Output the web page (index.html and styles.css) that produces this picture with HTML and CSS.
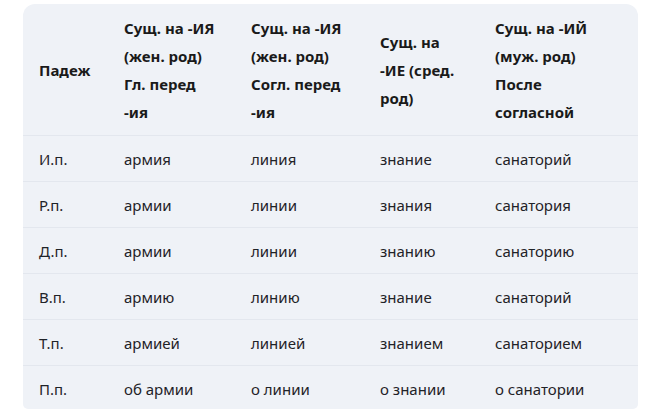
FILE: index.html
```html
<!DOCTYPE html>
<html lang="ru">
<head>
<meta charset="utf-8">
<link rel="stylesheet" href="styles.css">
</head>
<body>
<div class="wrap">
<table class="cases">
<colgroup>
<col class="c1"><col class="c2"><col class="c3"><col class="c4"><col class="c5">
</colgroup>
<thead>
<tr>
<th>Падеж</th>
<th>Сущ. на -ИЯ (жен. род) Гл. перед -ия</th>
<th>Сущ. на -ИЯ (жен. род) Согл. перед -ия</th>
<th>Сущ. на -ИЕ (сред. род)</th>
<th>Сущ. на -ИЙ (муж. род) После согласной</th>
</tr>
</thead>
<tbody>
<tr><td>И.п.</td><td>армия</td><td>линия</td><td>знание</td><td>санаторий</td></tr>
<tr><td>Р.п.</td><td>армии</td><td>линии</td><td>знания</td><td>санатория</td></tr>
<tr><td>Д.п.</td><td>армии</td><td>линии</td><td>знанию</td><td>санаторию</td></tr>
<tr><td>В.п.</td><td>армию</td><td>линию</td><td>знание</td><td>санаторий</td></tr>
<tr><td>Т.п.</td><td>армией</td><td>линией</td><td>знанием</td><td>санаторием</td></tr>
<tr><td>П.п.</td><td>об армии</td><td>о линии</td><td>о знании</td><td>о санатории</td></tr>
</tbody>
</table>
</div>
</body>
</html>
```
FILE: styles.css
```css
html, body {
  margin: 0;
  padding: 0;
  background: #ffffff;
}
body {
  font-family: "Noto Sans", "Open Sans", sans-serif;
  color: #1f2328;
}
.wrap {
  margin: 4px 0 0 23px;
  width: 615px;
  height: 405px;
  background: #eff2f7;
  border-radius: 12px 12px 5px 5px;
  overflow: hidden;
}
.cases {
  width: 100%;
  border-collapse: collapse;
  table-layout: fixed;
}
.c1 { width: 85px; }
.c2 { width: 127px; }
.c3 { width: 129px; }
.c4 { width: 115px; }
.c5 { width: 159px; }
th, td {
  text-align: left;
  vertical-align: middle;
  padding: 9px 16px 8px;
  line-height: 28px;
}
th {
  font-size: 15px;
  font-weight: 700;
  color: #1a1a1a;
  padding-top: 10px;
  padding-bottom: 9px;
}
td {
  font-size: 15px;
  border-top: 1px solid #e3e7ee;
}
```
